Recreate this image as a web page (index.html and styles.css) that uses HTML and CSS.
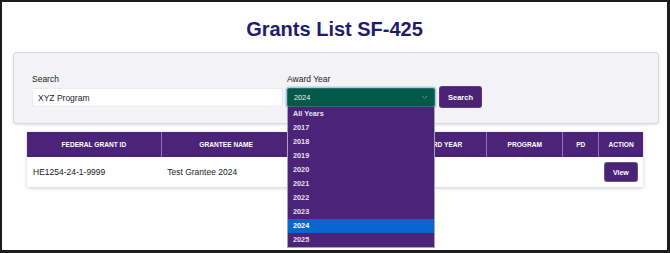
FILE: index.html
```html
<!DOCTYPE html>
<html>
<head>
    <title>Grants List SF-425</title>
    <link rel="stylesheet" href="styles.css">
</head>
<body>
    <div class="frame">
        <h1 class="title">Grants List SF-425</h1>

        <div class="filters">
            <div class="field">
                <label class="label">Search</label>
                <input class="search-input" type="text" value="XYZ Program">
            </div>
            <div class="field year-field">
                <label class="label">Award Year</label>
                <div class="select">
                    <span>2024</span>
                    <svg class="chevron" width="7" height="5" viewBox="0 0 7 5">
                        <path d="M1 1 L3.5 3.5 L6 1" fill="none" stroke="#5f8a7e" stroke-width="1"/>
                    </svg>
                </div>
                <ul class="options">
                    <li>All Years</li>
                    <li>2017</li>
                    <li>2018</li>
                    <li>2019</li>
                    <li>2020</li>
                    <li>2021</li>
                    <li>2022</li>
                    <li>2023</li>
                    <li class="selected">2024</li>
                    <li>2025</li>
                </ul>
            </div>
            <button class="btn search-btn">Search</button>
        </div>

        <table class="grants">
            <thead>
                <tr>
                    <th class="col-id">Federal Grant ID</th>
                    <th class="col-name">Grantee Name</th>
                    <th class="col-state"></th>
                    <th class="col-year">Award Year</th>
                    <th class="col-program">Program</th>
                    <th class="col-pd">PD</th>
                    <th class="col-action">Action</th>
                </tr>
            </thead>
            <tbody>
                <tr>
                    <td>HE1254-24-1-9999</td>
                    <td>Test Grantee 2024</td>
                    <td></td>
                    <td></td>
                    <td></td>
                    <td></td>
                    <td class="action"><button class="btn view-btn">View</button></td>
                </tr>
            </tbody>
        </table>
    </div>
</body>
</html>
```

FILE: styles.css
```css
body {
    margin: 0;
    font-family: "Liberation Sans", Arial, sans-serif;
    background-color: #fff;
}
.frame {
    box-sizing: border-box;
    width: 670px;
    height: 253px;
    border-style: solid;
    border-color: #1c1c1c;
    border-width: 2px 3px 3px 2px;
    overflow: hidden;
}
.title {
    margin: 15px 0 11px;
    font-size: 20px;
    line-height: 24px;
    text-align: center;
    color: #1f1c70;
}
.filters {
    display: flex;
    align-items: flex-end;
    gap: 4px;
    margin: 0 8px 0 11px;
    padding: 21px 18px 16px;
    background-color: #f3f2f7;
    border: 1px solid #d9d9dd;
    border-radius: 4px;
    box-shadow: 0 1px 3px rgba(0, 0, 0, 0.12);
}
.label {
    display: block;
    margin-bottom: 4px;
    font-size: 8.5px;
    line-height: 10px;
    color: #222;
}
.search-input {
    display: block;
    box-sizing: border-box;
    width: 251px;
    height: 19px;
    margin: 0;
    padding: 0 5px;
    border: 1px solid #ececf0;
    border-radius: 2px;
    background-color: #fff;
    font-family: inherit;
    font-size: 8.5px;
    color: #222;
}
.year-field {
    position: relative;
}
.select {
    box-sizing: border-box;
    display: flex;
    align-items: center;
    justify-content: space-between;
    width: 148px;
    height: 19px;
    padding: 0 6px;
    background-color: #045a48;
    border: 1px solid #2f6f62;
    border-radius: 2px;
    box-shadow: 0 0 0 1.5px #a9cbe9;
    font-size: 7.3px;
    color: #f2f2f2;
}
.options {
    position: absolute;
    top: 100%;
    left: 0;
    box-sizing: border-box;
    width: 148px;
    margin: 0;
    padding: 0;
    list-style: none;
    background-color: #4b2378;
    border: 1px solid #a7a3ad;
    border-top: none;
    z-index: 2;
}
.options li {
    height: 14px;
    line-height: 14px;
    padding-left: 5px;
    font-size: 7.3px;
    font-weight: bold;
    color: #e6e0ee;
}
.options li.selected {
    background-color: #0a66cf;
    color: #fff;
}
.btn {
    display: block;
    margin: 0;
    padding: 0;
    border: none;
    border-radius: 2px;
    background-color: #4a2377;
    color: #fff;
    font-family: inherit;
    font-weight: bold;
    cursor: pointer;
}
.search-btn {
    width: 41px;
    height: 20px;
    margin-left: 1px;
    font-size: 7.5px;
    box-shadow: 0 0 0 1px #5b3a86;
}
.grants {
    width: 616px;
    margin: 8px 0 0 25px;
    border-collapse: collapse;
    box-shadow: 0 1px 4px rgba(0, 0, 0, 0.2);
    background-color: #fff;
}
.grants th {
    height: 25px;
    padding: 0;
    background-color: #4b2378;
    border-left: 1px solid #8d77aa;
    color: #fff;
    font-size: 6.6px;
    text-transform: uppercase;
    text-align: center;
}
.grants th:first-child {
    border-left: none;
}
.col-id { width: 135px; }
.col-name { width: 130px; }
.col-state { width: 103px; }
.col-year { width: 93px; }
.col-program { width: 76px; }
.col-pd { width: 35px; }
.col-action { width: 44px; }
.grants td {
    height: 30px;
    padding: 0 6px;
    font-size: 8.5px;
    color: #222;
}
.grants td.action {
    padding: 0;
}
.view-btn {
    width: 32px;
    height: 18px;
    margin: 0 auto;
    font-size: 7px;
    box-shadow: 0 0 0 1px #6a4f90;
}
```
